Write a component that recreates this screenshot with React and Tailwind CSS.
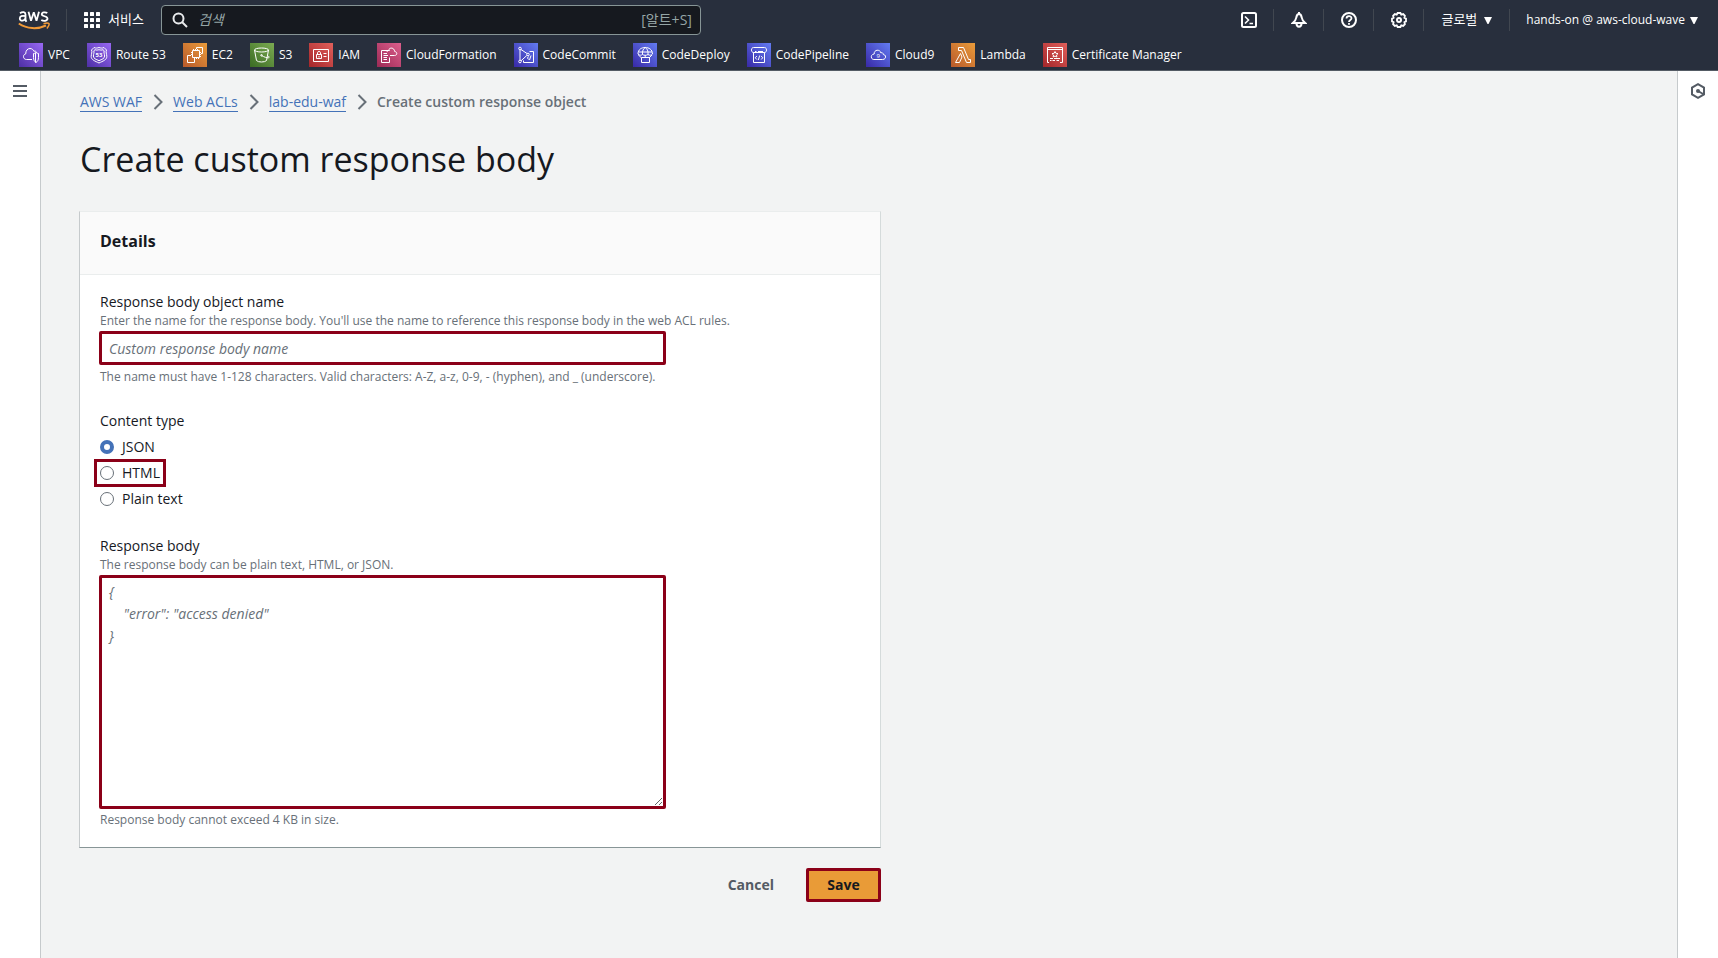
import React from "react";

const line = { fill: "none", stroke: "#fff", strokeWidth: 1 };

const purple = { from: "#4d2fa5", to: "#9868f4" };
const orange = { from: "#b8592b", to: "#ea9c3a" };
const blue = { from: "#3829a6", to: "#637cf2" };
const red = { from: "#a3262a", to: "#e2605b" };

const services = [
  {
    name: "VPC", ...purple,
    art: (
      <g {...line}>
        <path d="M13 16.500H7.600C5.600 16.500 4.500 15.200 4.500 13.600C4.500 12.100 5.400 11.200 6.700 10.900C6.700 7.500 8.600 5.500 11 5.500C13 5.500 14.300 6.700 14.900 8.300C16.200 7.700 17.500 8.500 17.700 9.700" />
        <path d="M14.500 10.500C16 10.500 16.500 9.500 17 9.500S18 10.500 19.500 10.500V14.500C19.500 17 18.500 18.600 17 19.500C15.500 18.600 14.500 17 14.500 14.500V10.500ZM16.500 9.500V19.500" />
      </g>
    ),
  },
  {
    name: "Route 53", ...purple,
    art: (
      <g {...line}>
        <path d="M7 4.500C9 5.500 10.500 5 12 4.500C13.500 5 15 5.500 17 4.500L19.500 7C18.500 9 19.800 11 19.800 13.500C19.800 17 16 18 12 20C8 18 4.200 17 4.200 13.500C4.200 11 5.500 9 4.500 7Z" />
        <path d="M8 6.700C9.500 7.400 10.800 7 12 6.700C13.200 7 14.500 7.400 16 6.700L17.200 7.800C16.500 9.500 17.600 11 17.600 13C17.600 15.700 15 16.200 12 17.700C9 16.200 6.400 15.700 6.400 13C6.400 11 7.500 9.500 6.800 7.800Z" />
        <text x="12" y="14" fontSize="6" fill="#fff" stroke="none" textAnchor="middle" fontFamily="Open Sans, sans-serif" fontWeight="700">53</text>
      </g>
    ),
  },
  {
    name: "EC2", ...orange,
    art: (
      <g {...line}>
        <path d="M9.500 7.500H16.500V14.500H9.500ZM10.500 7.500V6M12.500 7.500V6M14.500 7.500V6M16.500 9.500H18M16.500 11.500H18M16.500 13.500H18M9.500 9.500H8M9.500 11.500H8M11.500 14.500V16M13.500 14.500V16M15.500 14.500V16" />
        <path d="M13.500 6V4.500H19.500V10.500H18M8 12.500H4.500V19.500H11.500V16" />
      </g>
    ),
  },
  {
    name: "S3", from: "#3a6b23", to: "#7cab52",
    art: (
      <g {...line}>
        <ellipse cx="11.500" cy="7" rx="7" ry="2" />
        <path d="M4.500 7L6.500 17.500C8 19.500 15 19.500 16.500 17.500L18.500 7M11.500 12.500C14 14 17 15 18.500 14.800C20 14.500 18.500 13 17.500 12.500" />
        <circle cx="11.500" cy="12.300" r="0.800" />
      </g>
    ),
  },
  {
    name: "IAM", ...red,
    art: (
      <g {...line}>
        <path d="M4.500 6.500H19.500V18.500H4.500ZM7.500 11.500H12.500V15.500H7.500ZM8.500 11.500V9.500C8.500 8.200 11.500 8.200 11.500 9.500V11.500M14.500 10.500H17.500M14.500 13.500H17.500M10 13V14.500" />
      </g>
    ),
  },
  {
    name: "CloudFormation", from: "#9b2a55", to: "#dd5f8d",
    art: (
      <g {...line}>
        <path d="M12.500 8V7.500H4.500V19.500H12.500V14.500M6.500 10.500H10M6.500 12.500H11M6.500 14.500H10M6.500 16.500H10" />
        <path d="M13 12.500H17.500C20.500 12.500 20.500 8.800 17.700 8.500C17.300 4.500 12.500 3.800 11.500 7.500C10.500 7.500 10 8.300 10.200 9" />
      </g>
    ),
  },
  {
    name: "CodeCommit", ...blue,
    art: (
      <g {...line}>
        <circle cx="6" cy="5.500" r="1.300" />
        <circle cx="6" cy="18.500" r="1.300" />
        <circle cx="14" cy="11.500" r="1.300" />
        <path d="M6 7V17M7 6.500L13 10.500M7 17.800L12.800 12.500M15.500 8.500H19.500V19.500H9.500V17.500M14.500 13.500L13.500 15L14.500 16.500M17 12.500L15.500 17" />
      </g>
    ),
  },
  {
    name: "CodeDeploy", ...blue,
    art: (
      <g {...line}>
        <path d="M5 11C5 6.500 8.500 4.500 12.200 4.500S19.500 6.500 19.500 11C18 12.500 16.500 12.500 15 11.500C13.500 12.500 11 12.500 9.500 11.500C8 12.500 6.500 12.500 5 11ZM9.500 11.500C9 8 10.500 5.500 12.200 4.500C14 5.500 15.500 8 15 11.500M5.500 9H19M5.500 12L8.500 15M19 12L16 15M8.500 14.500H16.500V19.500H8.500ZM12.200 12V14.500" />
      </g>
    ),
  },
  {
    name: "CodePipeline", ...blue,
    art: (
      <g {...line}>
        <path d="M6.500 4.500H17.500C20.200 4.500 20.200 9.500 17.500 9.500H6.500C3.800 9.500 3.800 4.500 6.500 4.500ZM6.500 9.500V19.500H17.500V9.500M8 8.500H9.500M11 8.500H16M9.800 13L8.300 14.800L9.800 16.500M14.200 13L15.700 14.800L14.200 16.500M12.700 12.500L11.300 17" />
      </g>
    ),
  },
  {
    name: "Cloud9", ...blue,
    art: (
      <g {...line}>
        <path d="M8 16.500H16.500C20.500 16.500 20.500 11.700 17.300 11.500C17.200 9.700 15.800 9.300 15 10C14 5.800 7.800 6.500 8.200 11C4.200 11.300 4.500 16.500 8 16.500Z" />
        <text x="12.300" y="14.700" fontSize="6" fill="#fff" stroke="none" textAnchor="middle" fontFamily="Open Sans, sans-serif">9</text>
      </g>
    ),
  },
  {
    name: "Lambda", ...orange,
    art: (
      <g {...line}>
        <path d="M7.500 4.500H12.500L17.500 16.500H19.500V19.500H15.500L10.500 7.500H7.500ZM9.500 10.500L11 14L8.500 19.500H4.500Z" />
      </g>
    ),
  },
  {
    name: "Certificate Manager", ...red,
    art: (
      <g {...line}>
        <path d="M6 19.500H4.500V4.500H19.500V19.500H17M4.500 6.500H19.500M7 15.500H10M11 15.500H17M7 17.500H8.500M9.500 17.500H12M13.500 17.500H16" />
        <path d="M12 8.500L12.900 10.300L15 10.600L13.500 12L13.900 14L12 13.100L10.100 14L10.500 12L9 10.600L11.100 10.300Z" />
      </g>
    ),
  },
];

function ServiceIcon({ id, from, to, children }) {
  return (
    <svg viewBox="0 0 24 24" className="size-6 shrink-0" aria-hidden="true">
      <linearGradient id={id} x1="0" y1="1" x2="1" y2="0">
        <stop offset="0" stopColor={from} />
        <stop offset="1" stopColor={to} />
      </linearGradient>
      <rect width="24" height="24" fill={`url(#${id})`} />
      {children}
    </svg>
  );
}

function AwsLogo() {
  return (
    <svg viewBox="0 0 32 20" className="h-5 w-8" aria-hidden="true">
      <g fill="none" stroke="#fff" strokeWidth="1.800">
        <path d="M2 3.300C4.500 1.500 7.500 1.800 7.500 4.500V9.500C7.500 10.600 8 11 8.500 11.700M7.500 6.200C4 5.200 1.800 6.200 1.800 8.500C1.800 11.800 7.500 11.200 7.500 7.500" />
        <path d="M10.500 1.800L13 10.800L15.800 2.300L18.500 10.800L21 1.800" strokeLinejoin="bevel" />
        <path d="M29.300 3C27.500 1.900 23.800 2 23.800 4.200C23.800 6.800 29.500 5.700 29.500 8.600C29.500 11.300 25.300 11.300 23.300 9.900" />
      </g>
      <path d="M0.800 13.500C9 19 19.500 19.500 28 15.500" fill="none" stroke="#f19a38" strokeWidth="2" />
      <path d="M25.500 13.700C28 13 30.500 13 31 13.700S30.300 17 28.900 18.500" fill="none" stroke="#f19a38" strokeWidth="1.500" />
    </svg>
  );
}

const Divider = () => <span className="h-[22px] w-px bg-[#414750]" />;

function IconButton({ label, children }) {
  return (
    <button type="button" aria-label={label} className="flex w-[49px] justify-center">
      <svg viewBox="0 0 16 16" className="size-4" fill="none" stroke="#fff" strokeWidth="2">
        {children}
      </svg>
    </button>
  );
}

const Caret = () => (
  <svg viewBox="0 0 8 7" className="h-[7px] w-2" aria-hidden="true">
    <path d="M0 0H8L4.500 7H3.500Z" fill="#fff" />
  </svg>
);

function Header() {
  return (
    <header className="border-b border-[#545b64] bg-[#282f3d] text-white">
      <div className="flex h-10 items-center pr-5 pl-[18px]">
        <a href="#home" aria-label="AWS">
          <AwsLogo />
        </a>
        <span className="ml-4 h-[22px] w-px bg-[#414750]" />
        <button type="button" className="ml-[17px] flex items-center gap-2 text-[13px]">
          <svg viewBox="0 0 16 16" className="size-4" fill="#fff" aria-hidden="true">
            {[0, 6, 12].map((y) => [0, 6, 12].map((x) => <rect key={`${x}-${y}`} x={x} y={y} width="4" height="4" rx="0.500" />))}
          </svg>
          서비스
        </button>
        <label className="ml-[17px] flex h-[30px] w-[540px] items-center gap-[10px] rounded-sm border border-[#879596] bg-[#16191f] px-2">
          <svg viewBox="0 0 16 16" className="ml-[2px] size-4 shrink-0" fill="none" stroke="#e9ebed" strokeWidth="2" aria-hidden="true">
            <circle cx="6.500" cy="6.500" r="5" />
            <path d="M10 10L15 15" />
          </svg>
          <input aria-label="검색" placeholder="검색" className="min-w-0 flex-1 bg-transparent text-sm outline-none placeholder:text-[#95a5a6] placeholder:italic" />
          <span className="text-sm text-[#95a5a6]">[알트+S]</span>
        </label>
        <nav className="ml-auto flex items-center">
          <IconButton label="CloudShell">
            <rect x="1" y="1" width="14" height="14" rx="1.500" />
            <path d="M4 4.500L7.500 8L4 11.500M8.500 11.500H12" strokeWidth="1.600" />
          </IconButton>
          <Divider />
          <IconButton label="Notifications">
            <path d="M8 2C6.300 2 5.600 3.500 5.300 5.500C5 8 3.500 9.500 1.800 11H14.200C12.500 9.500 11 8 10.700 5.500C10.400 3.500 9.700 2 8 2ZM8 0V2M5.500 11.500C5.500 15.700 10.500 15.700 10.500 11.500" />
          </IconButton>
          <Divider />
          <IconButton label="Help">
            <circle cx="8" cy="8" r="7" />
            <path d="M5.500 6.500C5.500 3.300 10.500 3.300 10.500 6.300C10.500 8 8 8 8 10M8 11V12.800" strokeWidth="1.800" />
          </IconButton>
          <Divider />
          <IconButton label="Settings">
            <path d="M6.600 1H9.400L10.300 2.600L12.200 2.100L13.900 3.800L13.400 5.700L15 6.600V9.400L13.400 10.300L13.900 12.200L12.200 13.900L10.300 13.400L9.400 15H6.600L5.700 13.400L3.800 13.900L2.100 12.200L2.600 10.300L1 9.400V6.600L2.600 5.700L2.100 3.800L3.800 2.100L5.700 2.600Z" strokeWidth="1.800" />
            <circle cx="8" cy="8" r="2" />
          </IconButton>
          <Divider />
          <button type="button" className="flex items-center gap-[7px] px-[17px] text-[13px]">
            글로벌 <Caret />
          </button>
          <Divider />
          <button type="button" className="flex items-center gap-[5px] pl-4 text-xs font-medium">
            hands-on @ aws-cloud-wave <Caret />
          </button>
        </nav>
      </div>
      <nav className="flex h-[30px] items-center gap-[17px] px-[19px] text-xs font-medium">
        {services.map((s, i) => (
          <a key={s.name} href="#service" className="flex items-center gap-[5px] whitespace-nowrap">
            <ServiceIcon id={`tile-${i}`} from={s.from} to={s.to}>{s.art}</ServiceIcon>
            {s.name}
          </a>
        ))}
      </nav>
    </header>
  );
}

function Breadcrumbs() {
  return (
    <nav aria-label="Breadcrumb" className="text-sm leading-5">
      <ol className="flex items-center gap-[10px]">
        {["AWS WAF", "Web ACLs", "lab-edu-waf"].map((t) => (
          <li key={t} className="flex items-center gap-[11px]">
            <a href="#crumb" className="border-b border-[#4472b8] leading-[18px] text-[#4472b8]">{t}</a>
            <svg viewBox="0 0 10 16" className="h-4 w-[10px]" fill="none" stroke="#687078" strokeWidth="2" aria-hidden="true">
              <path d="M1.500 1L8.500 8L1.500 15" />
            </svg>
          </li>
        ))}
        <li className="font-semibold text-[#687078]">Create custom response object</li>
      </ol>
    </nav>
  );
}

function Radio({ label, checked, marked }) {
  return (
    <div className="flex h-[26px] items-center">
      <label className="relative flex items-center gap-2 text-sm leading-5">
        <input
          type="radio"
          name="content-type"
          defaultChecked={checked}
          className="size-[14px] appearance-none rounded-full border border-[#687078] bg-white checked:border-4 checked:border-[#4472b8]"
        />
        {label}
        {marked && <span className="pointer-events-none absolute -inset-x-[6px] -inset-y-1 border-3 border-[#8b0018]" />}
      </label>
    </div>
  );
}

export default function App() {
  return (
    <div className="flex min-h-screen flex-col bg-[#f2f3f3] font-['Open_Sans','Noto_Sans_CJK_KR',sans-serif] text-[#16191f]">
      <Header />
      <div className="flex flex-1">
        <aside className="w-[41px] shrink-0 border-r border-[#c6cacc] bg-white pt-[13px] pl-[13px]">
          <button type="button" aria-label="Open navigation" className="block">
            <svg viewBox="0 0 14 14" className="size-[14px]" stroke="#545b64" strokeWidth="2">
              <path d="M0 2H14M0 7H14M0 12H14" />
            </svg>
          </button>
        </aside>
        <main className="flex-1 px-[38px] pt-[21px]">
          <div className="px-px">
            <Breadcrumbs />
            <h1 className="mt-5 text-[34px] leading-[55px]">Create custom response body</h1>
          </div>
          <form className="mt-6 max-w-[802px]" onSubmit={(e) => e.preventDefault()}>
            <section className="border border-t-[#eaeded] border-r-[#d5dbdb] border-b-[#879596] border-l-[#c6cacc] bg-white">
              <header className="border-b border-[#eaeded] bg-[#fafafa] px-5 pt-[17px] pb-[21px]">
                <h2 className="text-base leading-6 font-bold">Details</h2>
              </header>
              <div className="px-5 pt-[17px] pb-[18px]">
                <label htmlFor="name" className="block text-sm leading-5">Response body object name</label>
                <p className="text-xs leading-[18px] text-[#687078]">
                  Enter the name for the response body. You'll use the name to reference this response body in the web ACL rules.
                </p>
                <input
                  id="name"
                  placeholder="Custom response body name"
                  className="mt-px -ml-px block h-[34px] w-[567px] rounded-xs border-3 border-[#8b0018] bg-white px-[7px] text-sm outline-none placeholder:text-[#687078] placeholder:italic"
                />
                <p className="mt-[3px] text-xs leading-[18px] text-[#687078]">
                  The name must have 1-128 characters. Valid characters: A-Z, a-z, 0-9, - (hyphen), and _ (underscore).
                </p>
                <fieldset className="mt-[25px]">
                  <legend className="pb-[3px] text-sm leading-5">Content type</legend>
                  <Radio label="JSON" checked />
                  <Radio label="HTML" marked />
                  <Radio label="Plain text" />
                </fieldset>
                <label htmlFor="body" className="mt-6 block text-sm leading-5">Response body</label>
                <p className="text-xs leading-[18px] text-[#687078]">The response body can be plain text, HTML, or JSON.</p>
                <textarea
                  id="body"
                  placeholder={'{\n    "error": "access denied"\n}'}
                  className="mt-px -ml-px block h-[234px] w-[567px] resize rounded-xs border-3 border-[#8b0018] bg-white px-[7px] py-[3px] text-sm leading-[22px] outline-none placeholder:text-[#687078] placeholder:italic"
                />
                <p className="mt-[2px] text-xs leading-[18px] text-[#687078]">Response body cannot exceed 4 KB in size.</p>
              </div>
            </section>
            <div className="mt-5 flex items-center justify-end gap-8 text-sm font-bold">
              <button type="button" className="text-[#545b64]">Cancel</button>
              <button type="submit" className="h-[34px] w-[75px] rounded-xs border-3 border-[#8b0018] bg-[#e99b37] pb-px">Save</button>
            </div>
          </form>
        </main>
        <aside className="w-[41px] shrink-0 border-l border-[#c6cacc] bg-white pt-3 pl-3">
          <button type="button" aria-label="Open panel" className="block">
            <svg viewBox="0 0 16 16" className="size-4" fill="none" stroke="#545b64" strokeWidth="2">
              <path d="M8 1.200L14 4.500V11.500L8 14.800L2 11.500V4.500Z" />
              <circle cx="8" cy="8" r="2" fill="#545b64" stroke="none" />
              <path d="M8 8L14 11.500" />
            </svg>
          </button>
        </aside>
      </div>
    </div>
  );
}
